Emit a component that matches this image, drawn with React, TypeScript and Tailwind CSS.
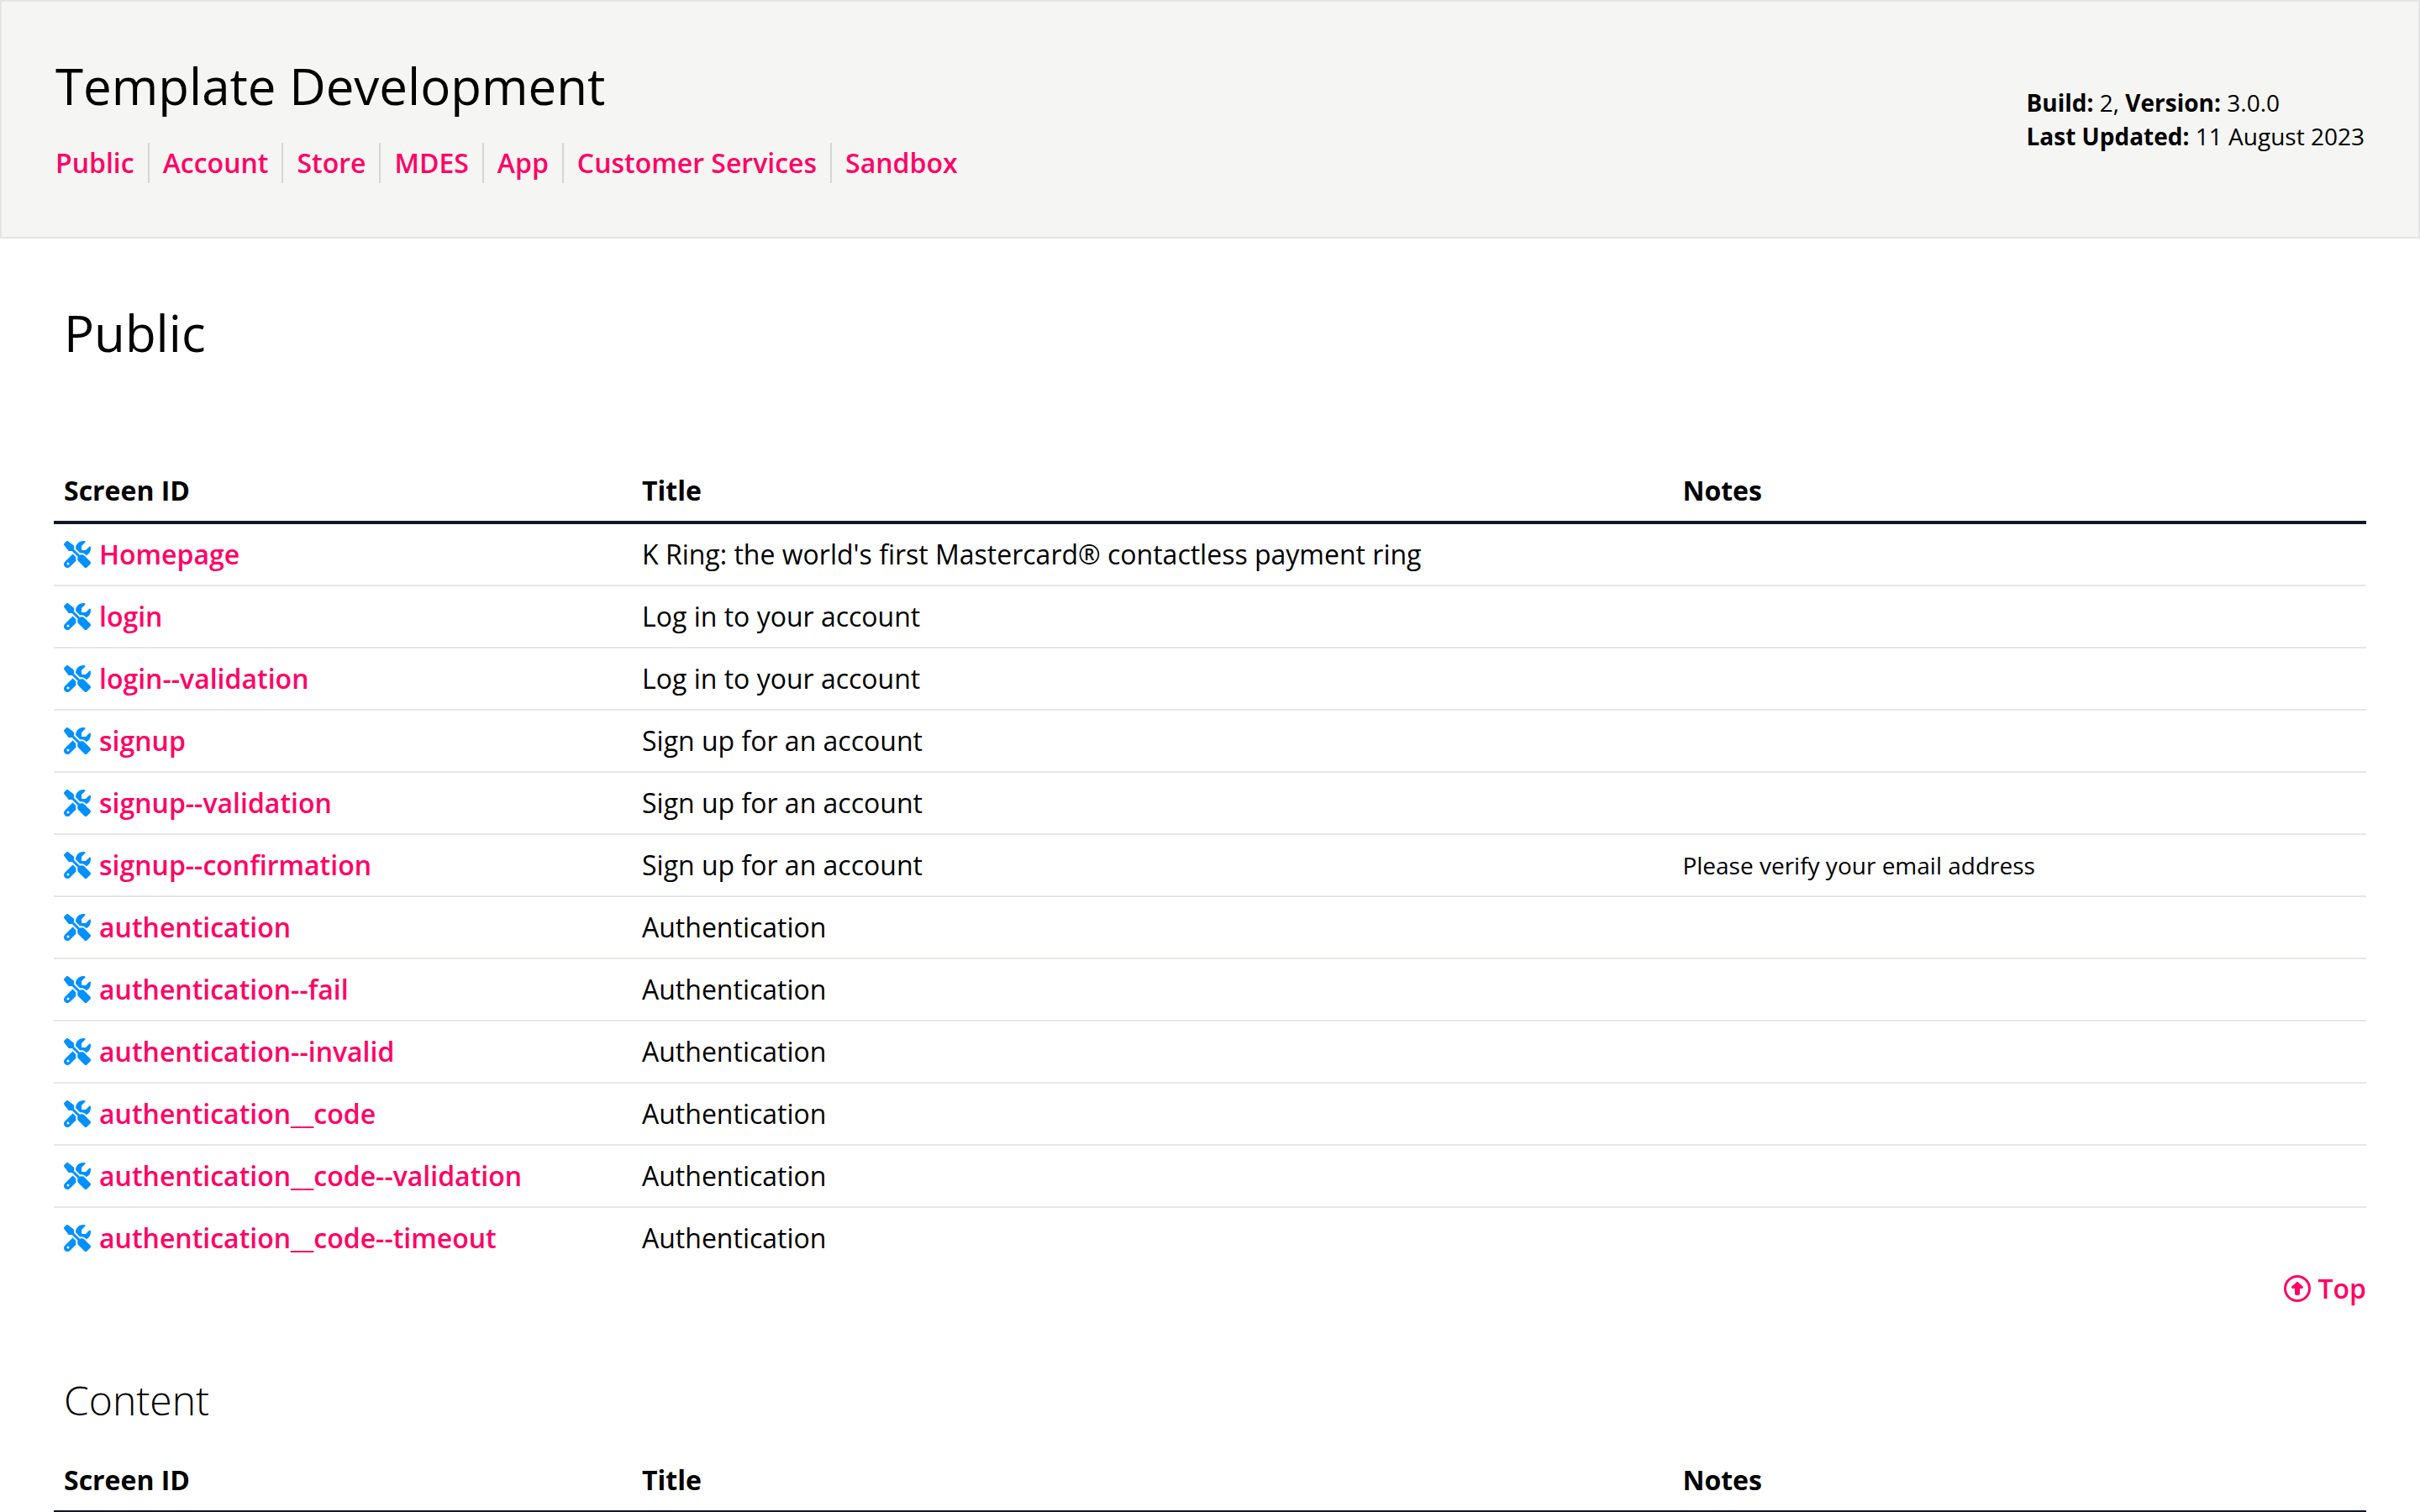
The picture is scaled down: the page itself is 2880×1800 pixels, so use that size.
import { FaRegCircleUp, FaScrewdriverWrench } from "react-icons/fa6";

type Screen = { id: string; title: string; notes?: string };

const sections = ["Public", "Account", "Store", "MDES", "App", "Customer Services", "Sandbox"];

const publicScreens: Screen[] = [
  { id: "Homepage", title: "K Ring: the world's first Mastercard® contactless payment ring" },
  { id: "login", title: "Log in to your account" },
  { id: "login--validation", title: "Log in to your account" },
  { id: "signup", title: "Sign up for an account" },
  { id: "signup--validation", title: "Sign up for an account" },
  { id: "signup--confirmation", title: "Sign up for an account", notes: "Please verify your email address" },
  { id: "authentication", title: "Authentication" },
  { id: "authentication--fail", title: "Authentication" },
  { id: "authentication--invalid", title: "Authentication" },
  { id: "authentication__code", title: "Authentication" },
  { id: "authentication__code--validation", title: "Authentication" },
  { id: "authentication__code--timeout", title: "Authentication" },
];

function ScreenTable({ label, screens }: { label: string; screens: Screen[] }) {
  return (
    <table aria-label={label} className="w-full table-fixed border-separate border-spacing-0 text-left">
      <thead>
        <tr>
          <th scope="col" className="w-[25%] border-b-4 border-[#111827] p-3 font-bold">Screen ID</th>
          <th scope="col" className="w-[45%] border-b-4 border-[#111827] p-3 font-bold">Title</th>
          <th scope="col" className="w-[30%] border-b-4 border-[#111827] p-3 font-bold">Notes</th>
        </tr>
      </thead>
      <tbody className="[&>tr:last-child>td]:border-b-0">
        {screens.map((screen) => (
          <tr key={screen.id}>
            <td className="border-b-2 border-gray-200 p-3">
              <a href={`#${screen.id}`} className="flex items-center gap-2.5 font-semibold text-[#ff0066]">
                <FaScrewdriverWrench className="size-8 shrink-0 text-[#0090ff]" aria-hidden="true" />
                {screen.id}
              </a>
            </td>
            <td className="border-b-2 border-gray-200 p-3">{screen.title}</td>
            <td className="border-b-2 border-gray-200 p-3 text-[28px]">{screen.notes}</td>
          </tr>
        ))}
      </tbody>
    </table>
  );
}

export default function App() {
  return (
    <div id="top" className="bg-white font-['Open_Sans',sans-serif] text-[32px] leading-[48px] text-black">
      <header className="flex items-center justify-between border-2 border-[#e5e5e3] bg-[#f5f5f3] p-16">
        <div>
          <h1 className="mb-8 text-[60px] leading-[72px]">Template Development</h1>
          <nav aria-label="Sections">
            <ul className="flex flex-wrap divide-x-2 divide-[#d6d6d4]">
              {sections.map((name) => (
                <li key={name} className="px-4 first:pl-0">
                  <a href={`#${name}`} className="font-semibold text-[#ff0066]">{name}</a>
                </li>
              ))}
            </ul>
          </nav>
        </div>
        <div className="text-[28px] leading-[40px]">
          <p>
            <strong>Build:</strong> 2, <strong>Version:</strong> 3.0.0
          </p>
          <p>
            <strong>Last Updated:</strong> 11 August 2023
          </p>
        </div>
      </header>
      <main className="px-16 pt-[76px]">
        <section id="Public">
          <h2 className="mb-[116px] px-3 text-[60px] leading-[72px]">Public</h2>
          <ScreenTable label="Public screens" screens={publicScreens} />
          <div className="flex justify-end">
            <a href="#top" className="flex items-center gap-2 font-semibold text-[#ff0066]">
              <FaRegCircleUp className="size-8" aria-hidden="true" />
              Top
            </a>
          </div>
        </section>
        <section id="Content" className="mt-[72px]">
          <h3 className="mb-[22px] px-3 text-5xl leading-[74px] font-light">Content</h3>
          <ScreenTable label="Content screens" screens={[]} />
        </section>
      </main>
    </div>
  );
}
